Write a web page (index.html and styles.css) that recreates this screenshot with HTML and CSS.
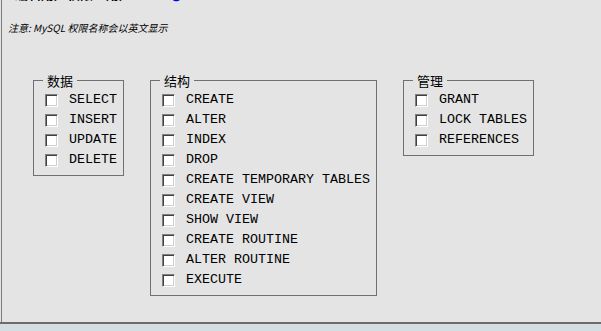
FILE: index.html
```html
<!DOCTYPE html>
<html>
<head>
<meta charset="utf-8">
<link rel="stylesheet" href="styles.css">
</head>
<body>
<div class="main">
  <div class="title">编辑用户权限：用户 <a href="#">'root'@</a> - <a href="#">localhost test</a> -</div>
  <div class="note">注意: MySQL 权限名称会以英文显示</div>
  <div class="groups">
    <fieldset class="grp g1">
      <legend>数据</legend>
      <div class="row"><span class="cb"></span><span class="lbl">SELECT</span></div>
      <div class="row"><span class="cb"></span><span class="lbl">INSERT</span></div>
      <div class="row"><span class="cb"></span><span class="lbl">UPDATE</span></div>
      <div class="row"><span class="cb"></span><span class="lbl">DELETE</span></div>
    </fieldset>
    <fieldset class="grp g2">
      <legend>结构</legend>
      <div class="row"><span class="cb"></span><span class="lbl">CREATE</span></div>
      <div class="row"><span class="cb"></span><span class="lbl">ALTER</span></div>
      <div class="row"><span class="cb"></span><span class="lbl">INDEX</span></div>
      <div class="row"><span class="cb"></span><span class="lbl">DROP</span></div>
      <div class="row"><span class="cb"></span><span class="lbl">CREATE TEMPORARY TABLES</span></div>
      <div class="row"><span class="cb"></span><span class="lbl">CREATE VIEW</span></div>
      <div class="row"><span class="cb"></span><span class="lbl">SHOW VIEW</span></div>
      <div class="row"><span class="cb"></span><span class="lbl">CREATE ROUTINE</span></div>
      <div class="row"><span class="cb"></span><span class="lbl">ALTER ROUTINE</span></div>
      <div class="row"><span class="cb"></span><span class="lbl">EXECUTE</span></div>
    </fieldset>
    <fieldset class="grp g3">
      <legend>管理</legend>
      <div class="row"><span class="cb"></span><span class="lbl">GRANT</span></div>
      <div class="row"><span class="cb"></span><span class="lbl">LOCK TABLES</span></div>
      <div class="row"><span class="cb"></span><span class="lbl">REFERENCES</span></div>
    </fieldset>
  </div>
</div>
<div class="footer"></div>
</body>
</html>
```
FILE: styles.css
```css
html, body {
  margin: 0;
  padding: 0;
  background: #e4e4e4;
  overflow: hidden;
}
body {
  width: 601px;
  height: 331px;
}
.main {
  margin-left: 1px;
  border-left: 1px solid #7c7c7c;
  height: 322px;
  box-sizing: border-box;
  background: #e4e4e4;
  overflow: hidden;
}
.title {
  font-family: "Noto Sans CJK SC", sans-serif;
  font-size: 13px;
  line-height: 16px;
  height: 16px;
  margin-top: -14px;
  padding-left: 13px;
  color: #000;
  font-weight: bold;
  white-space: nowrap;
}
.title a {
  color: #0000ff;
  text-decoration: none;
}
.note {
  margin-top: 20px;
  padding-left: 6px;
  font-family: "Noto Sans CJK SC", sans-serif;
  font-size: 10px;
  line-height: 12px;
  font-style: italic;
  color: #000;
}
.groups {
  display: flex;
  align-items: flex-start;
  gap: 26px;
  margin-top: 39px;
  padding-left: 31px;
}
.grp {
  margin: 0;
  padding: 2px 0 5px 11px;
  border: 1px solid #707070;
  box-sizing: border-box;
  min-width: 0;
}
.g1 { width: 91px; }
.g2 { width: 227px; }
.g3 { width: 131px; }
.grp legend {
  font-family: "Noto Sans CJK SC", sans-serif;
  font-size: 13px;
  line-height: 15px;
  height: 15px;
  padding: 0 4px;
  margin-left: -2px;
  color: #000;
}
.row {
  display: flex;
  align-items: center;
  height: 20px;
}
.cb {
  width: 13px;
  height: 13px;
  box-sizing: border-box;
  background: #fff;
  border: 1px solid;
  border-color: #808080 #ffffff #ffffff #808080;
  box-shadow: inset 1px 1px 0 #404040, inset -1px -1px 0 #d4d0c8;
  flex: none;
}
.lbl {
  margin-left: 11px;
  font-family: "Liberation Mono", "Courier New", monospace;
  font-size: 13.33px;
  line-height: 20px;
  color: #000;
  white-space: nowrap;
}
.footer {
  height: 9px;
  border-top: 2px solid #6b6b6b;
  background: #d4dde1;
}
```
